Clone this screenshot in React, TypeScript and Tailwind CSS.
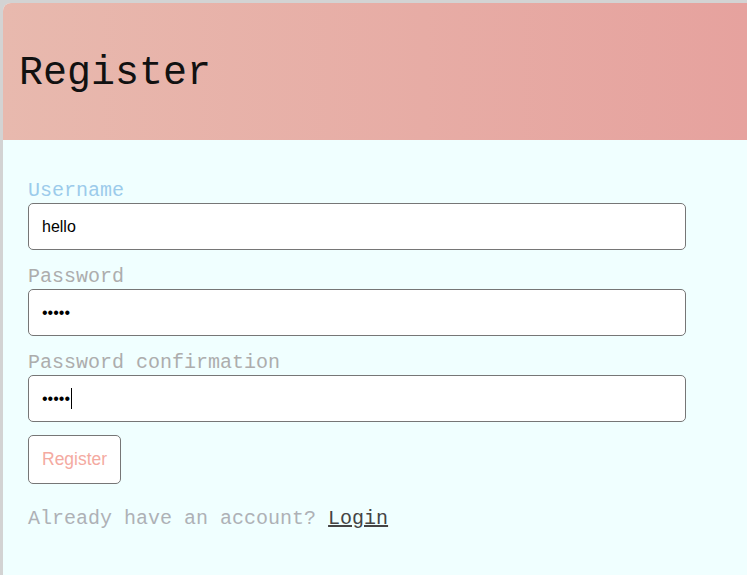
import { useState } from "react";

const mono = "font-['Liberation_Mono','DejaVu_Sans_Mono',monospace]";
const sans = "font-['Liberation_Sans',Arial,sans-serif]";

type FieldProps = {
  label: string;
  labelClass: string;
  type?: string;
  value: string;
  onChange: (v: string) => void;
  caret?: boolean;
};

function Field({ label, labelClass, type = "text", value, onChange, caret }: FieldProps) {
  return (
    <div className="flex flex-col">
      <label className={`${mono} text-[20px] leading-6 ${labelClass}`}>{label}</label>
      <div className="relative w-[658px]">
        <input
          type={type}
          value={value}
          onChange={(e) => onChange(e.target.value)}
          className={`${sans} h-[47px] w-full rounded-[5px] border border-[#767676] bg-white px-[13px] text-[16px] text-black outline-none`}
        />
        {caret && <span className="absolute left-[43px] top-[13px] h-[21px] w-px bg-black" />}
      </div>
    </div>
  );
}

export default function App() {
  const [username, setUsername] = useState("hello");
  const [password, setPassword] = useState("hello");
  const [confirm, setConfirm] = useState("hello");

  return (
    <div className="min-h-screen bg-[#d3d3d3] pl-[3px] pt-[3px]">
      <div className="min-h-[572px] overflow-hidden rounded-tl-[8px] bg-[#f0ffff]">
        <div className="flex h-[137px] items-center bg-gradient-to-r from-[#e8b9ae] to-[#e6a29e] px-4 pt-[5px]">
          <h1 className={`${mono} text-[40px] leading-none text-[#111]`}>Register</h1>
        </div>
        <form className="flex flex-col gap-[15px] pl-[25px] pt-[39px]" onSubmit={(e) => e.preventDefault()}>
          <Field label="Username" labelClass="text-[#9ccbeb]" value={username} onChange={setUsername} />
          <Field label="Password" labelClass="text-[#adadad]" type="password" value={password} onChange={setPassword} />
          <Field
            label="Password confirmation"
            labelClass="text-[#adadad]"
            type="password"
            value={confirm}
            onChange={setConfirm}
            caret
          />
          <div className="-mt-[2px]">
            <button
              type="submit"
              className={`${sans} h-[49px] rounded-[5px] border border-[#767676] bg-white px-[13px] text-[17.5px] text-[#f4aaa1]`}
            >
              Register
            </button>
          </div>
          <p className={`${mono} mt-[8px] text-[20px] leading-6 text-[#aeb1b6]`}>
            Already have an account?{" "}
            <a href="#" className="text-[#444] underline">
              Login
            </a>
          </p>
        </form>
      </div>
    </div>
  );
}
